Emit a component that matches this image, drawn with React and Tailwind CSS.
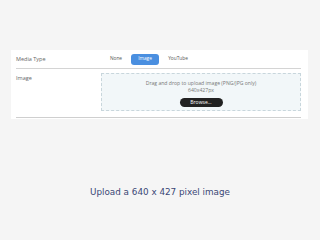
import React from 'react';

const MediaRow = () => (
  <div className="flex items-center h-[19px] border-b border-[#d4d4d4]">
    <div className="w-[85px] text-[5.5px] text-[#666]">Media Type</div>
    <div className="flex items-center text-[4.8px] text-[#555]">
      <span className="w-[30px] text-center">None</span>
      <span className="w-[28px] h-[11px] rounded-[3px] bg-[#4a8fe0] text-white flex items-center justify-center">Image</span>
      <span className="w-[38px] text-center">YouTube</span>
    </div>
  </div>
);

const ImageRow = () => (
  <div className="flex pt-[4px] pb-[6px] border-b border-[#cfcfcf]">
    <div className="w-[85px] text-[5.5px] text-[#666] pt-[1px]">Image</div>
    <div className="flex-1 h-[38px] border border-dashed border-[#c8d6dc] bg-[#f2f7f9] flex flex-col items-center pt-[6px]">
      <p className="text-[5.1px] leading-[7px] text-[#777]">Drag and drop to upload image (PNG/JPG only)</p>
      <p className="text-[5.1px] leading-[7px] text-[#777]">640x427px</p>
      <button className="mt-[4px] w-[43px] h-[9px] rounded-full bg-[#222] text-white text-[5px] flex items-center justify-center">Browse...</button>
    </div>
  </div>
);

export default function App() {
  return (
    <div className="w-[320px] h-[240px] bg-[#f5f5f5] pt-[50px] pl-[11px] font-['Open_Sans',sans-serif]">
      <div className="w-[297px] bg-white pl-[5px] pr-[7px] pb-[1px]">
        <MediaRow />
        <ImageRow />
      </div>
      <p className="mt-[67px] ml-[-11px] w-[320px] text-center text-[8.8px] text-[#3a4775] font-['DejaVu_Sans',sans-serif]">
        Upload a 640 x 427 pixel image
      </p>
    </div>
  );
}
